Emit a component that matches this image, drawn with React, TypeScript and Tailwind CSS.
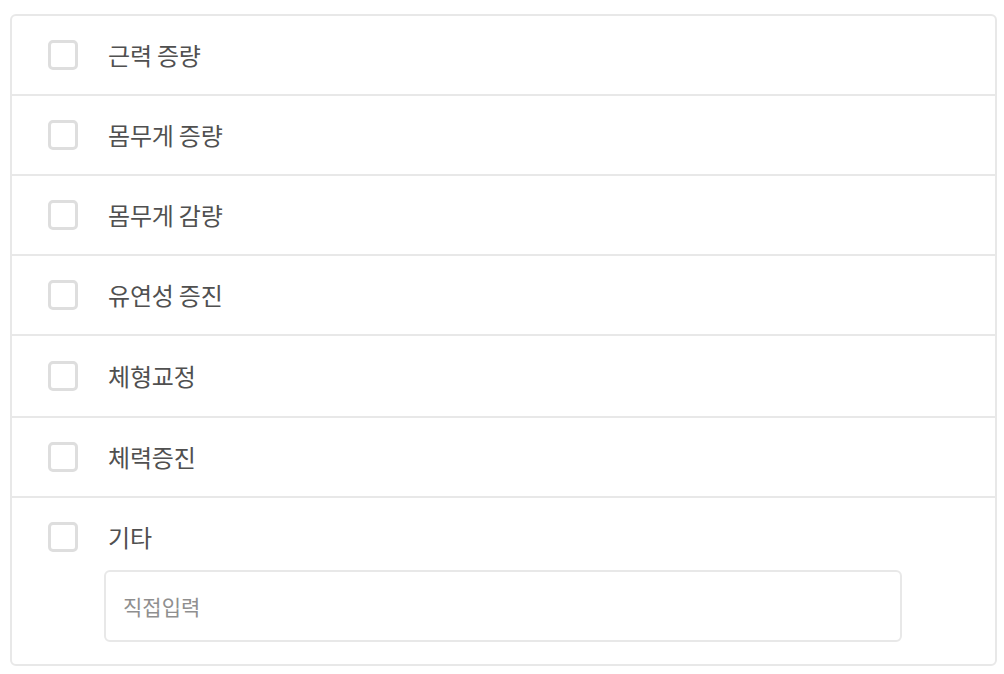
const goals = ["근력 증량", "몸무게 증량", "몸무게 감량", "유연성 증진", "체형교정", "체력증진"];

const Box = () => (
  <span className="block w-[30px] h-[30px] shrink-0 rounded-[5px] border-[3px] border-[#dedede] bg-white" />
);

export default function App() {
  return (
    <div
      className="w-[1004px] h-[674px] bg-white pt-[14px] pl-[10px]"
      style={{ fontFamily: '"Noto Sans CJK KR", "Noto Sans", sans-serif' }}
    >
      <div className="w-[987px] border-2 border-[#e8e8e8] rounded-[6px] overflow-hidden">
        {goals.map((g, i) => (
          <label
            key={g}
            className={`flex items-center gap-[30px] pl-[36px] border-b-2 border-[#e8e8e8] cursor-pointer ${
              i === 4 ? "h-[82px]" : "h-[80px]"
            }`}
          >
            <Box />
            <span className="text-[24px] text-[#505050] leading-none tracking-[-0.2px]">{g}</span>
          </label>
        ))}
        <div className="pl-[36px] pt-[24px] pb-[22px]">
          <label className="flex items-center gap-[30px] h-[30px] cursor-pointer">
            <Box />
            <span className="text-[24px] text-[#505050] leading-none tracking-[-0.2px]">기타</span>
          </label>
          <input
            placeholder="직접입력"
            className="mt-[18px] ml-[56px] block w-[798px] h-[72px] border-2 border-[#e8e8e8] rounded-[6px] px-[17px] text-[21px] text-[#444] placeholder:text-[#8f8f8f] outline-none"
          />
        </div>
      </div>
    </div>
  );
}
